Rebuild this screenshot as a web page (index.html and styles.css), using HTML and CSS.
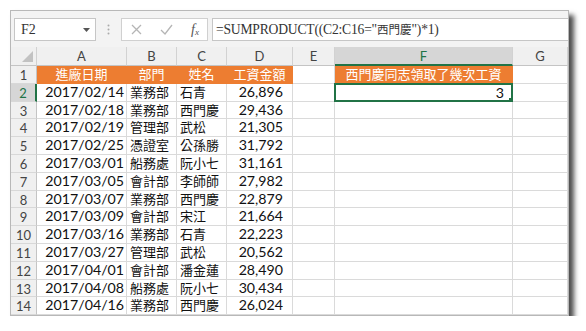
FILE: index.html
```html
<!DOCTYPE html>
<html lang="zh-Hant">
<head>
  <meta charset="UTF-8" />
  <title>SUMPRODUCT</title>
  <link rel="stylesheet" href="styles.css">
</head>
<body>
  <div class="window">
    <div class="formula-bar">
      <div class="name-box">
        <span>F2</span>
        <svg class="drop" width="7" height="4" viewBox="0 0 7 4"><path d="M0 0h7L3.5 4z" fill="#555"/></svg>
      </div>
      <div class="splitter">
        <svg width="3" height="11" viewBox="0 0 3 11"><circle cx="1.5" cy="1.5" r="1" fill="#aaa"/><circle cx="1.5" cy="5.5" r="1" fill="#aaa"/><circle cx="1.5" cy="9.5" r="1" fill="#aaa"/></svg>
      </div>
      <div class="fx-buttons">
        <svg width="11" height="11" viewBox="0 0 11 11"><path d="M1 1l9 9M10 1l-9 9" stroke="#b5b5b5" stroke-width="1.3"/></svg>
        <svg width="13" height="11" viewBox="0 0 13 11"><path d="M1 6l4 4 7-9" stroke="#b5b5b5" stroke-width="1.3" fill="none"/></svg>
        <span class="fx"><i>f</i><sub>x</sub></span>
      </div>
      <div class="formula">=SUMPRODUCT((C2:C16="<span class="cjk-small">西門慶</span>")*1)</div>
    </div>

    <div class="sheet">
      <div class="row cols">
        <div class="cell corner"></div>
        <div class="cell">A</div>
        <div class="cell">B</div>
        <div class="cell">C</div>
        <div class="cell">D</div>
        <div class="cell">E</div>
        <div class="cell active-col">F</div>
        <div class="cell">G</div>
      </div>

      <div class="row">
        <div class="cell rh">1</div>
        <div class="cell head">進廠日期</div>
        <div class="cell head">部門</div>
        <div class="cell head">姓名</div>
        <div class="cell head">工資金額</div>
        <div class="cell"></div>
        <div class="cell head">西門慶同志領取了幾次工資</div>
        <div class="cell"></div>
      </div>
      <div class="row">
        <div class="cell rh active-row">2</div>
        <div class="cell date">2017/02/14</div>
        <div class="cell txt">業務部</div>
        <div class="cell txt">石青</div>
        <div class="cell num">26,896</div>
        <div class="cell"></div>
        <div class="cell num selected">3</div>
        <div class="cell"></div>
      </div>
      <div class="row">
        <div class="cell rh">3</div>
        <div class="cell date">2017/02/18</div>
        <div class="cell txt">業務部</div>
        <div class="cell txt">西門慶</div>
        <div class="cell num">29,436</div>
        <div class="cell"></div><div class="cell"></div><div class="cell"></div>
      </div>
      <div class="row">
        <div class="cell rh">4</div>
        <div class="cell date">2017/02/19</div>
        <div class="cell txt">管理部</div>
        <div class="cell txt">武松</div>
        <div class="cell num">21,305</div>
        <div class="cell"></div><div class="cell"></div><div class="cell"></div>
      </div>
      <div class="row">
        <div class="cell rh">5</div>
        <div class="cell date">2017/02/25</div>
        <div class="cell txt">憑證室</div>
        <div class="cell txt">公孫勝</div>
        <div class="cell num">31,792</div>
        <div class="cell"></div><div class="cell"></div><div class="cell"></div>
      </div>
      <div class="row">
        <div class="cell rh">6</div>
        <div class="cell date">2017/03/01</div>
        <div class="cell txt">船務處</div>
        <div class="cell txt">阮小七</div>
        <div class="cell num">31,161</div>
        <div class="cell"></div><div class="cell"></div><div class="cell"></div>
      </div>
      <div class="row">
        <div class="cell rh">7</div>
        <div class="cell date">2017/03/05</div>
        <div class="cell txt">會計部</div>
        <div class="cell txt">李師師</div>
        <div class="cell num">27,982</div>
        <div class="cell"></div><div class="cell"></div><div class="cell"></div>
      </div>
      <div class="row">
        <div class="cell rh">8</div>
        <div class="cell date">2017/03/07</div>
        <div class="cell txt">業務部</div>
        <div class="cell txt">西門慶</div>
        <div class="cell num">22,879</div>
        <div class="cell"></div><div class="cell"></div><div class="cell"></div>
      </div>
      <div class="row">
        <div class="cell rh">9</div>
        <div class="cell date">2017/03/09</div>
        <div class="cell txt">會計部</div>
        <div class="cell txt">宋江</div>
        <div class="cell num">21,664</div>
        <div class="cell"></div><div class="cell"></div><div class="cell"></div>
      </div>
      <div class="row">
        <div class="cell rh">10</div>
        <div class="cell date">2017/03/16</div>
        <div class="cell txt">業務部</div>
        <div class="cell txt">石青</div>
        <div class="cell num">22,223</div>
        <div class="cell"></div><div class="cell"></div><div class="cell"></div>
      </div>
      <div class="row">
        <div class="cell rh">11</div>
        <div class="cell date">2017/03/27</div>
        <div class="cell txt">管理部</div>
        <div class="cell txt">武松</div>
        <div class="cell num">20,562</div>
        <div class="cell"></div><div class="cell"></div><div class="cell"></div>
      </div>
      <div class="row">
        <div class="cell rh">12</div>
        <div class="cell date">2017/04/01</div>
        <div class="cell txt">會計部</div>
        <div class="cell txt">潘金蓮</div>
        <div class="cell num">28,490</div>
        <div class="cell"></div><div class="cell"></div><div class="cell"></div>
      </div>
      <div class="row">
        <div class="cell rh">13</div>
        <div class="cell date">2017/04/08</div>
        <div class="cell txt">船務處</div>
        <div class="cell txt">阮小七</div>
        <div class="cell num">30,434</div>
        <div class="cell"></div><div class="cell"></div><div class="cell"></div>
      </div>
      <div class="row">
        <div class="cell rh">14</div>
        <div class="cell date">2017/04/16</div>
        <div class="cell txt">業務部</div>
        <div class="cell txt">西門慶</div>
        <div class="cell num">26,024</div>
        <div class="cell"></div><div class="cell"></div><div class="cell"></div>
      </div>
    </div>
  </div>
</body>
</html>
```

FILE: styles.css
```css
body {
  margin: 0;
  background: #fff;
  font-family: 'Lato', 'Noto Sans CJK TC', sans-serif;
  color: #111;
}

.window {
  margin: 10px 0 0 10px;
  width: 557px;
  border: 1px solid #b8b8b8;
  background: #f3f3f3;
  box-shadow: 5px 5px 5px rgba(0, 0, 0, 0.7);
  overflow: hidden;
}

/* formula bar */
.formula-bar {
  display: flex;
  height: 23px;
  padding: 7px 0 6px 3px;
}

.name-box {
  width: 82px;
  box-sizing: border-box;
  border: 1px solid #c6c6c6;
  background: #fff;
  display: flex;
  align-items: center;
  justify-content: space-between;
  padding: 0 5px 0 6px;
  font-family: 'Liberation Serif', serif;
  font-size: 14px;
  color: #333;
}

.splitter {
  width: 25px;
  display: flex;
  align-items: center;
  justify-content: center;
}

.fx-buttons {
  width: 87px;
  box-sizing: border-box;
  border: 1px solid #d0d0d0;
  background: #fff;
  display: flex;
  align-items: center;
  justify-content: space-between;
  padding: 0 8px 0 9px;
}

.fx {
  font-family: 'Liberation Serif', serif;
  font-size: 14px;
  color: #555;
}

.fx sub {
  font-size: 9px;
  font-style: italic;
  vertical-align: -1px;
}

.formula {
  flex: 1;
  margin-left: 4px;
  border: 1px solid #c6c6c6;
  border-right: none;
  background: #fff;
  padding-left: 3px;
  font-family: 'Liberation Serif', serif;
  font-size: 13.6px;
  letter-spacing: -0.2px;
  line-height: 21px;
  color: #333;
  white-space: nowrap;
}

.cjk-small {
  font-family: 'Noto Sans CJK TC', sans-serif;
  font-size: 11.5px;
  letter-spacing: 0;
}

/* sheet */
.sheet {
  background: #fff;
}

.row {
  display: grid;
  grid-template-columns: 26px 90px 50px 50px 66px 42px 178px 55px;
  height: 17.8px;
}

.cell {
  box-sizing: border-box;
  border-right: 1px solid #dadada;
  border-bottom: 1px solid #dadada;
  font-size: 14.2px;
  line-height: 16.8px;
  white-space: nowrap;
  overflow: hidden;
}

.cols {
  height: 19px;
}

.cols .cell {
  background: #f0f0f0;
  border-right-color: #d2d2d2;
  border-bottom-color: #c4c4c4;
  text-align: center;
  font-size: 13px;
  line-height: 18px;
  color: #444;
}

.corner {
  position: relative;
}

.corner::after {
  content: '';
  position: absolute;
  right: 3px;
  bottom: 3px;
  border-style: solid;
  border-width: 0 0 11px 11px;
  border-color: transparent transparent #c2c2c2 transparent;
}

.cols .active-col {
  background: #d6d6d6;
  color: #217346;
  border-bottom: 2px solid #217346;
}

.rh {
  background: #f0f0f0;
  border-right-color: #c4c4c4;
  border-bottom-color: #d8d8d8;
  text-align: center;
  font-size: 13px;
  color: #444;
  line-height: 18px;
}

.rh.active-row {
  background: #d6d6d6;
  color: #217346;
  border-right: 2px solid #217346;
}

.head {
  background: #ed7d31;
  border-color: #ed7d31;
  color: #fff;
  text-align: center;
  font-size: 13px;
}

.date {
  text-align: right;
  padding-right: 2px;
}

.txt {
  font-size: 13px;
  padding-left: 3px;
}

.num {
  text-align: right;
  padding-right: 9px;
}

.selected {
  position: relative;
  border: 2px solid #217346;
  margin: -1px 0 0 -1px;
  padding-right: 7px;
}

.selected::after {
  content: '';
  position: absolute;
  right: -4px;
  bottom: -4px;
  width: 5px;
  height: 5px;
  background: #217346;
  border: 1px solid #fff;
}
```
